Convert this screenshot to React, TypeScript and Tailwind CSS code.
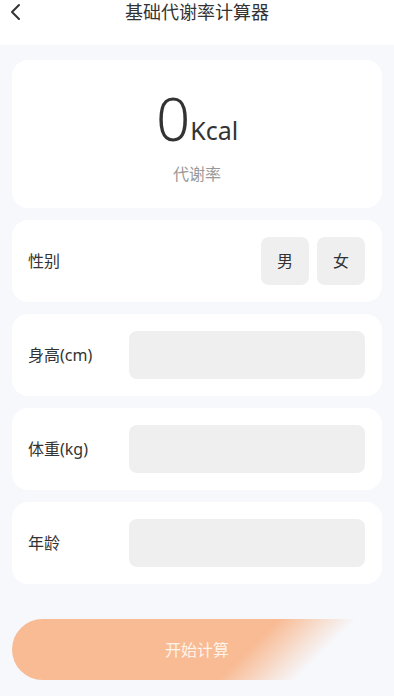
import React, { useState } from 'react';

const font = { fontFamily: '"Noto Sans", "Noto Sans CJK SC", sans-serif' };

function Row({ label, children }: { label: string; children: React.ReactNode }) {
  return (
    <div className="flex h-[82px] items-center rounded-2xl bg-white pl-4 pr-[17px]">
      <span className="w-[101px] shrink-0 text-[16px] text-[#333]">{label}</span>
      {children}
    </div>
  );
}

export default function App() {
  const [sex, setSex] = useState<'m' | 'f' | null>(null);
  const [height, setHeight] = useState('');
  const [weight, setWeight] = useState('');
  const [age, setAge] = useState('');

  return (
    <div className="h-[696px] w-[394px] overflow-hidden bg-[#f6f8fc]" style={font}>
      {/* Header */}
      <div className="relative flex h-[45px] items-start justify-center bg-white">
        <button className="absolute left-[8px] top-[1px] text-[#333]">
          <svg width="16" height="22" viewBox="0 0 16 22" fill="none">
            <path d="M11 4 L4 11 L11 18" stroke="#333" strokeWidth="2" strokeLinecap="round" strokeLinejoin="round" />
          </svg>
        </button>
        <h1 className="text-[18px] leading-[24px] text-[#333]">基础代谢率计算器</h1>
      </div>

      <div className="flex flex-col gap-3 px-3 pt-[15px]">
        {/* Result */}
        <div className="flex h-[148px] flex-col items-center justify-center rounded-2xl bg-white pt-[6px]">
          <div className="flex items-end text-[#333]">
            <span className="text-[60px] font-light leading-[60px]">0</span>
            <span className="pb-[3px] text-[25px] leading-[30px]">Kcal</span>
          </div>
          <span className="mt-[14px] text-[16px] text-[#999]">代谢率</span>
        </div>

        {/* Sex */}
        <div className="flex h-[82px] items-center justify-between rounded-2xl bg-white pl-4 pr-[17px]">
          <span className="text-[16px] text-[#333]">性别</span>
          <div className="flex gap-2">
            <button
              onClick={() => setSex('m')}
              className={`h-12 w-12 rounded-lg text-[16px] ${sex === 'm' ? 'bg-[#f8bb94] text-white' : 'bg-[#efefef] text-[#333]'}`}
            >
              男
            </button>
            <button
              onClick={() => setSex('f')}
              className={`h-12 w-12 rounded-lg text-[16px] ${sex === 'f' ? 'bg-[#f8bb94] text-white' : 'bg-[#efefef] text-[#333]'}`}
            >
              女
            </button>
          </div>
        </div>

        <Row label="身高(cm)">
          <input
            value={height}
            onChange={(e) => setHeight(e.target.value)}
            className="h-12 w-0 min-w-0 flex-1 rounded-lg bg-[#efefef] px-3 text-[16px] outline-none"
          />
        </Row>
        <Row label="体重(kg)">
          <input
            value={weight}
            onChange={(e) => setWeight(e.target.value)}
            className="h-12 w-0 min-w-0 flex-1 rounded-lg bg-[#efefef] px-3 text-[16px] outline-none"
          />
        </Row>
        <Row label="年龄">
          <input
            value={age}
            onChange={(e) => setAge(e.target.value)}
            className="h-12 w-0 min-w-0 flex-1 rounded-lg bg-[#efefef] px-3 text-[16px] outline-none"
          />
        </Row>

        {/* Submit */}
        <button className="mt-[23px] h-[61px] w-full rounded-l-full bg-[linear-gradient(135deg,#f8bb94_0%,#f8bb94_62%,rgba(248,187,148,0)_80%)] text-[16px] text-[#fff4ec]">
          开始计算
        </button>
      </div>
    </div>
  );
}
